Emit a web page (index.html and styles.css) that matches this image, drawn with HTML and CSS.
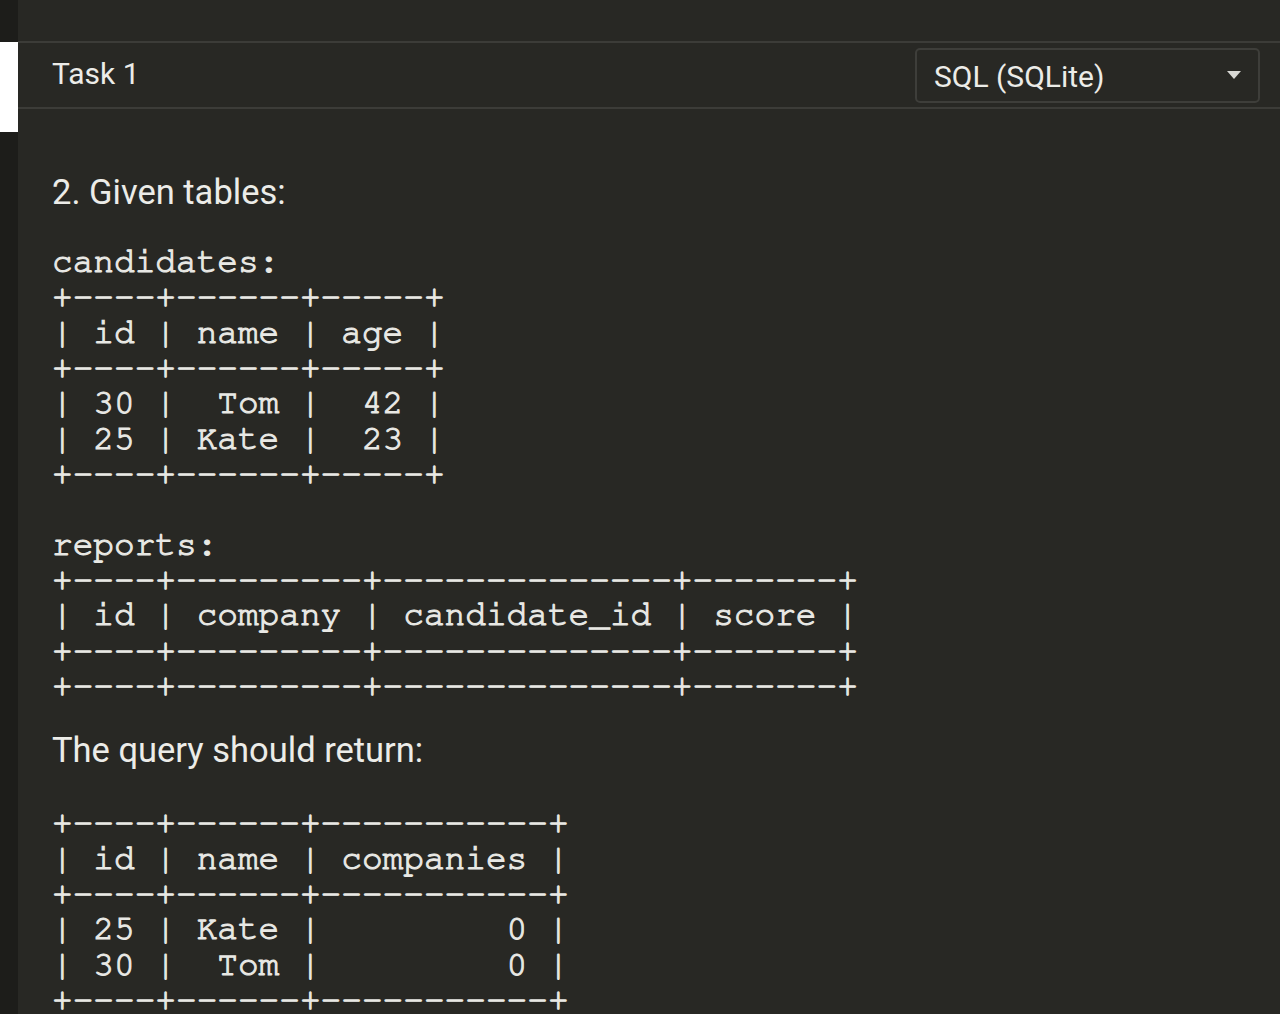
FILE: index.html
```html
<!DOCTYPE html>
<html>
<head>
<meta charset="utf-8">
<link rel="stylesheet" href="styles.css">
</head>
<body>
<div class="app">
  <aside class="rail"><div class="rail-mark"></div></aside>
  <main class="main">
    <div class="topbar"></div>
    <header class="taskbar">
      <div class="task-title">Task 1</div>
      <div class="lang-select">
        <span class="lang-label">SQL (SQLite)</span>
        <svg class="caret" width="14" height="8" viewBox="0 0 14 8"><path d="M0 0H14L7 8Z" fill="#d8d8d4"/></svg>
      </div>
    </header>
    <section class="desc">
      <p class="para para-first">2. Given tables:</p>
<pre class="code code-first">candidates:
+----+------+-----+
| id | name | age |
+----+------+-----+
| 30 |  Tom |  42 |
| 25 | Kate |  23 |
+----+------+-----+

reports:
+----+---------+--------------+-------+
| id | company | candidate_id | score |
+----+---------+--------------+-------+
+----+---------+--------------+-------+</pre>
      <p class="para para-second">The query should return:</p>
<pre class="code code-second">+----+------+-----------+
| id | name | companies |
+----+------+-----------+
| 25 | Kate |         0 |
| 30 |  Tom |         0 |
+----+------+-----------+</pre>
    </section>
  </main>
</div>
</body>
</html>
```

FILE: styles.css
```css
html, body {
  margin: 0;
  padding: 0;
  background: #282824;
  height: 100%;
  overflow: hidden;
}

.app {
  display: flex;
  height: 1014px;
  color: #e6e6e2;
  font-family: Roboto, "Noto Sans", sans-serif;
}

.rail {
  width: 18px;
  flex: none;
  background: #1d1d1a;
  padding-top: 42px;
}

.rail-mark {
  width: 18px;
  height: 90px;
  background: #ffffff;
}

.main {
  flex: 1;
  min-width: 0;
}

.topbar {
  box-sizing: border-box;
  height: 43px;
  border-bottom: 2px solid #3c3c38;
}

.taskbar {
  height: 66px;
  box-sizing: border-box;
  border-bottom: 2px solid #3c3c38;
  display: flex;
  align-items: center;
  justify-content: space-between;
  padding: 0 20px 0 34px;
}

.task-title {
  font-size: 30px;
  line-height: 1;
  color: #ecece8;
  margin-top: -2px;
}

.lang-select {
  width: 345px;
  height: 55px;
  box-sizing: border-box;
  border: 2px solid #3e3e3a;
  border-radius: 5px;
  display: flex;
  align-items: center;
  justify-content: space-between;
  padding: 0 17px 0 17px;
}

.lang-label {
  font-size: 30px;
  color: #ecece8;
  margin-top: 2px;
}

.caret {
  display: block;
}

.desc {
  padding: 0 34px;
}

.para {
  margin: 0;
  font-size: 34.5px;
  line-height: 40px;
  color: #ecece8;
}

.para-first {
  margin-top: 63px;
}

.para-second {
  margin-top: 27px;
}

.code {
  margin: 0;
  font-family: "Nimbus Mono PS", "Nimbus Mono L", "FreeMono", "Courier New", "Liberation Mono", monospace;
  font-size: 34.45px;
  line-height: 35.33px;
  color: #e8e8e4;
  font-weight: normal;
  -webkit-text-stroke: 1.1px #e8e8e4;
}

.code-first {
  margin-top: 32px;
}

.code-second {
  margin-top: 35px;
}
```
